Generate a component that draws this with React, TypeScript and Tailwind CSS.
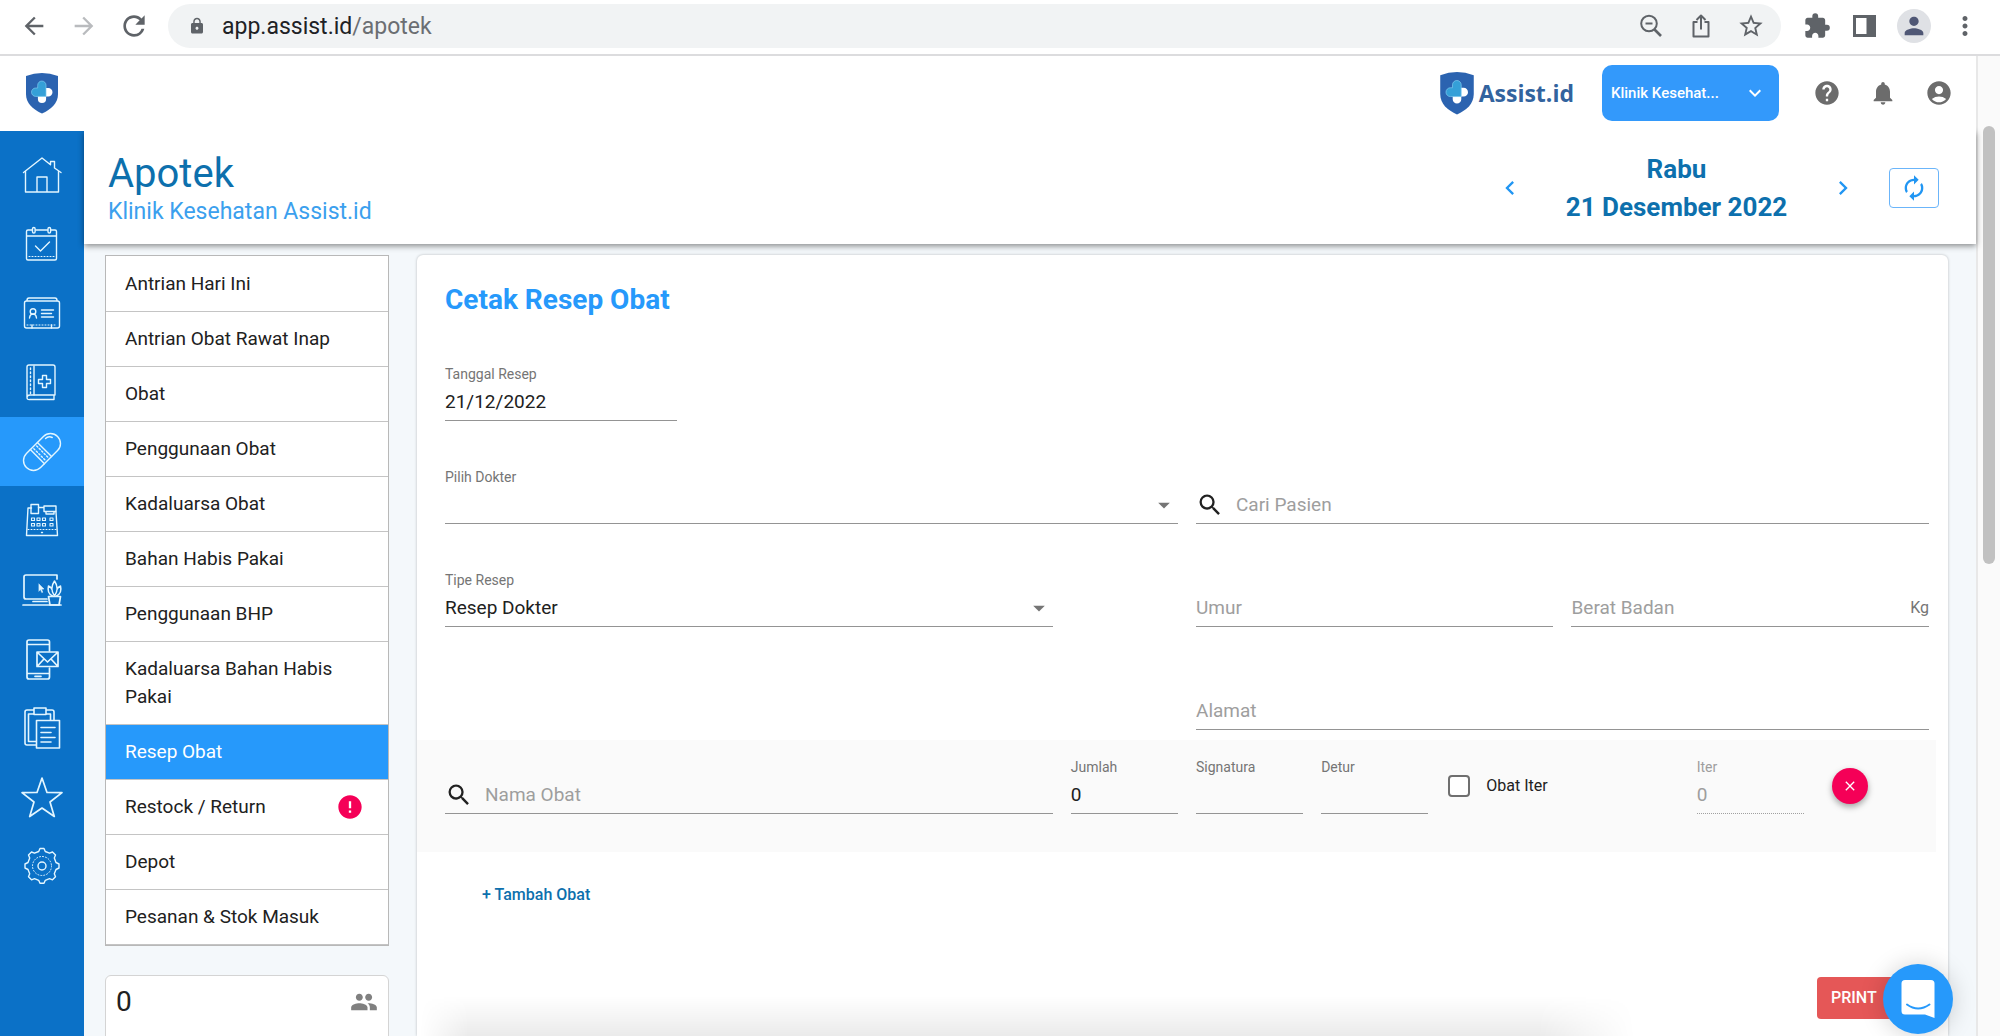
import React, { useId } from "react";
import {
  MdArrowBack,
  MdArrowForward,
  MdRefresh,
  MdLock,
  MdStarBorder,
  MdExtension,
  MdPerson,
  MdMoreVert,
  MdHelp,
  MdNotifications,
  MdAccountCircle,
  MdKeyboardArrowDown,
  MdChevronLeft,
  MdChevronRight,
  MdAutorenew,
  MdSearch,
  MdArrowDropDown,
  MdGroup,
  MdClose,
  MdError,
} from "react-icons/md";

const iconButton = "flex shrink-0 items-center justify-center";

function Shield({ className }: { className: string }) {
  return (
    <svg viewBox="0 0 34 42" className={className} aria-hidden="true">
      <path d="M1 4Q9 1 17 1t16 3V22c0 9.500-7 15.500-16 19.500C8 37.500 1 31.500 1 22Z" fill="#2b63b0" />
      <path d="M20.500 16h2.800a4.200 4.200 0 0 1 0 8.400h-2.800ZM12.900 24h8.200v3a4.100 4.100 0 0 1-8.200 0Z" fill="#fff" />
      <path
        d="M21 24.400H10.700a4.200 4.200 0 0 1 0-8.400h2V13.200a4.150 4.150 0 0 1 8.300 0Z"
        fill="#35a0d8"
        stroke="#7cc8ef"
        strokeWidth="0.700"
      />
    </svg>
  );
}

function Line({ children }: { children: React.ReactNode }) {
  return (
    <svg
      viewBox="0 0 44 44"
      className="size-11"
      fill="none"
      stroke="#e3f6ff"
      strokeWidth="1.400"
      strokeLinejoin="round"
      strokeLinecap="round"
      aria-hidden="true"
    >
      {children}
    </svg>
  );
}

const navItems: { name: string; active?: boolean; art: React.ReactNode }[] = [
  {
    name: "Beranda",
    art: (
      <>
        <path d="M3.500 18.500 22 4l8.500 6.800V7.500h4V14l6.500 4.500" />
        <path d="M5.500 17.500V38h33V17.500M17 38V23h10v15" />
      </>
    ),
  },
  {
    name: "Jadwal",
    art: (
      <>
        <rect x="6.500" y="7" width="30" height="30" rx="1.500" />
        <path d="M7 13h29M15.500 23l5 5 9-9" />
        <rect x="12.500" y="4.500" width="2.600" height="5.500" rx="1.300" fill="#0b71c7" />
        <rect x="28" y="4.500" width="2.600" height="5.500" rx="1.300" fill="#0b71c7" />
        <path d="M9 33.500h26" strokeDasharray="1 2" strokeWidth="1" />
      </>
    ),
  },
  {
    name: "Pasien",
    art: (
      <>
        <rect x="4.500" y="9" width="35" height="27" rx="2" />
        <path d="M7 8.500q0-2.500 2-2.500h26q2 0 2 2.500M21.500 18h12M21.500 21.500h10M21.500 25h12M12 33v3M31.500 33v3" />
        <circle cx="13" cy="19.500" r="2.800" />
        <path d="M9.500 26q.5-4 3.500-4t3.500 4" />
        <path d="M7 33h30" strokeDasharray="1 2" strokeWidth="1" />
      </>
    ),
  },
  {
    name: "Rekam Medis",
    art: (
      <>
        <path d="M7 36V6q0-2 2-2h24q2 0 2 2v28H10q-3 0-3 2.500T10 38.500h24V34" />
        <path d="M14 5v29" />
        <path d="M10.500 7v26" strokeDasharray="1.500 2.500" />
        <path d="M22.500 14.500h4v4h4v4h-4v4h-4v-4h-4v-4h4Z" />
      </>
    ),
  },
  {
    name: "Apotek",
    active: true,
    art: (
      <g transform="rotate(-45 22 22)">
        <rect x="0" y="12" width="44" height="20" rx="10" />
        <path d="M15.500 12v20M25.500 12v20M34 15q4 0 5.500 4" />
        <path d="M18.500 14v17M22.500 14v17" strokeDasharray="1.500 2" />
      </g>
    ),
  },
  {
    name: "Kasir",
    art: (
      <>
        <path d="M11.500 9H8L6.500 36.500h31L36 13" />
        <rect x="11" y="5.500" width="7.500" height="9" />
        <path d="M18.500 8.500h5.500M24 7h12v5.500H24ZM26 12.500V15h8v-2.500" />
        <path
          d="M11.500 19h3v2.500h-3ZM17 19h3v2.500h-3ZM22.500 19h3v2.500h-3ZM30 19h3v2.500h-3ZM11.500 24.500h3V27h-3ZM17 24.500h3V27h-3ZM22.500 24.500h3V27h-3ZM30 24.500h3V27h-3Z"
          strokeWidth="1.100"
        />
        <path d="M8 30.500h28" strokeDasharray="1 2" strokeWidth="1" />
        <path d="M21.500 33.500h1" />
      </>
    ),
  },
  {
    name: "Kantor",
    art: (
      <g strokeWidth="1.700">
        <path d="M27 31H6q-2 0-2-2V9q0-2 2-2h31v4M3 37h38M13 33.500h14" />
        <path d="M28.500 28.500h12L39 37h-9Z" />
        <path
          d="M34.500 28c-3.500-5-3.500-10 0-15 3.500 5 3.500 10 0 15ZM32.500 28c-4-2-5-6-4-10 1.500.5 3 2 3.500 3.500M36.500 28c4-2 5-6 4-10-1.500.5-3 2-3.500 3.500"
          strokeWidth="1.500"
        />
        <path d="m19 16 5 5-2.500.2 1.300 3-1 .4-1.300-3-1.500 1.500Z" fill="#e3f6ff" strokeWidth="0.500" />
      </g>
    ),
  },
  {
    name: "Pesan",
    art: (
      <g strokeWidth="1.700">
        <path d="M29.500 14V5q0-2-2-2H9Q7 3 7 5v35q0 2 2 2h18.500q2 0 2-2v-9M7 7.500h22.500M7 36.500h22.500M15 39.300h6" />
        <path d="M17 15h21v14.500H17ZM17.500 15.500 27.500 25l10-9.500M17.500 29l6.500-7M37.500 29 31 22" />
      </g>
    ),
  },
  {
    name: "Laporan",
    art: (
      <g strokeWidth="1.600">
        <path d="M14 2h12v6.500H14ZM14 4H7Q5 4 5 6v31q0 2 2 2h9M26 4h6q2 0 2 2v8M14 8H8.500v27.500H16M26 8h4.500v6" />
        <path d="M16.500 14.500h23V42h-23ZM21 21.500h14M21 26.500h10M21 31.500h14M21 36h10" />
      </g>
    ),
  },
  {
    name: "Favorit",
    art: (
      <path d="m22 3 5 14.500 15 .2-12 9.300 4.300 14.500L22 33 9.700 41.500 14 27 2 17.700l15-.2Z" strokeWidth="1.700" />
    ),
  },
  {
    name: "Pengaturan",
    art: (
      <>
        <path d="M18.700 7.500 20 4.500h4l1.300 3 4.200 1.700 3-1.200 3 3-1.200 3L36 18.500l3 1.500v4l-3 1.500-1.700 4.300 1.200 3-3 3-3-1.200-4.200 1.700-1.300 3h-4l-1.300-3-4.200-1.700-3 1.200-3-3 1.200-3L8 25.500 5 24v-4l3-1.500 1.700-4.500-1.200-3 3-3 3 1.200Z" />
        <circle cx="22" cy="22" r="4" />
        <circle cx="22" cy="22" r="9.500" strokeDasharray="1 2" strokeWidth="1" />
      </>
    ),
  },
];

const menu: { label: string; active?: boolean; alert?: boolean }[] = [
  { label: "Antrian Hari Ini" },
  { label: "Antrian Obat Rawat Inap" },
  { label: "Obat" },
  { label: "Penggunaan Obat" },
  { label: "Kadaluarsa Obat" },
  { label: "Bahan Habis Pakai" },
  { label: "Penggunaan BHP" },
  { label: "Kadaluarsa Bahan Habis Pakai" },
  { label: "Resep Obat", active: true },
  { label: "Restock / Return", alert: true },
  { label: "Depot" },
  { label: "Pesanan & Stok Masuk" },
];

type FieldProps = {
  span: string;
  label?: string;
  placeholder?: string;
  value?: string;
  search?: boolean;
  suffix?: string;
  disabled?: boolean;
};

function Field({ span, label, placeholder, value, search, suffix, disabled }: FieldProps) {
  const id = useId();
  return (
    <div className={`${span} flex min-w-0 flex-col justify-end`}>
      {label && (
        <label
          htmlFor={id}
          className={`block h-5 text-sm leading-5 ${disabled ? "text-[#9e9e9e]" : "text-[#757575]"}`}
        >
          {label}
        </label>
      )}
      <div
        className={`flex h-[37px] items-center border-b ${
          disabled ? "border-dotted border-[#a0a0a0]" : "border-[#949494]"
        }`}
      >
        {search && <MdSearch className="mr-3 size-7 shrink-0 text-[#212121]" />}
        <input
          id={id}
          type="text"
          aria-label={label ? undefined : placeholder}
          defaultValue={value}
          placeholder={placeholder}
          disabled={disabled}
          className="w-full min-w-0 bg-transparent text-[19px] leading-7 text-[#212121] outline-none placeholder:text-[#9e9e9e] disabled:text-[#9e9e9e]"
        />
        {suffix && <span className="text-base text-[#757575]">{suffix}</span>}
      </div>
    </div>
  );
}

function SelectField({ span, label, options }: { span: string; label: string; options: string[] }) {
  const id = useId();
  return (
    <div className={`${span} min-w-0`}>
      <label htmlFor={id} className="block h-5 text-sm leading-5 text-[#757575]">
        {label}
      </label>
      <div className="grid h-[37px] items-center border-b border-[#949494]">
        <select
          id={id}
          className="col-start-1 row-start-1 w-full appearance-none bg-transparent text-[19px] leading-7 text-[#212121] outline-none"
        >
          {options.map((o) => (
            <option key={o}>{o}</option>
          ))}
        </select>
        <MdArrowDropDown className="pointer-events-none col-start-1 row-start-1 size-7 justify-self-end text-[#757575]" />
      </div>
    </div>
  );
}

function BrowserBar() {
  return (
    <div className="flex h-14 shrink-0 items-center border-b-2 border-[#dcdcde] bg-white px-5 pb-0.5 text-[#5f6368]">
      <button aria-label="Back" className={iconButton}>
        <MdArrowBack className="size-7" />
      </button>
      <button aria-label="Forward" className={`${iconButton} ml-[22px] text-[#b9bbbe]`}>
        <MdArrowForward className="size-7" />
      </button>
      <button aria-label="Reload" className={`${iconButton} ml-5`}>
        <MdRefresh className="size-8" />
      </button>
      <div className="ml-[18px] mr-[22px] flex h-11 min-w-0 flex-1 items-center rounded-full bg-[#f1f3f4] px-4">
        <MdLock className="ml-1 mr-4 size-[18px] shrink-0" />
        <span
          role="textbox"
          aria-label="Address"
          contentEditable
          suppressContentEditableWarning
          className="flex-1 pt-0.5 text-[23px] leading-8 text-[#202124] outline-none"
        >
          app.assist.id<span className="text-[#6b6e72]">/apotek</span>
        </span>
        <div className="flex items-center gap-[22px]">
          <button aria-label="Zoom" className={iconButton}>
            <svg viewBox="0 0 28 28" className="size-7" fill="none" stroke="currentColor" strokeWidth="2" aria-hidden="true">
              <circle cx="12" cy="11.500" r="7.800" />
              <path d="M8.500 11.500h7" />
              <path d="m17.500 17.500 6.500 6.500" strokeWidth="2.600" />
            </svg>
          </button>
          <button aria-label="Share" className={iconButton}>
            <svg viewBox="0 0 28 28" className="size-7" fill="none" stroke="currentColor" strokeWidth="2" aria-hidden="true">
              <path d="M10.500 10H6.500v14.500h15V10h-4M14 17.500V4M9.500 8 14 3.500 18.500 8" strokeLinejoin="round" />
            </svg>
          </button>
          <button aria-label="Bookmark" className={iconButton}>
            <MdStarBorder className="size-7" />
          </button>
        </div>
      </div>
      <div className="flex items-center gap-[19px]">
        <button aria-label="Extensions" className={iconButton}>
          <MdExtension className="size-7" />
        </button>
        <button aria-label="Side panel" className={iconButton}>
          <svg viewBox="0 0 28 28" className="size-7" aria-hidden="true">
            <path fillRule="evenodd" fill="currentColor" d="M3 3h23v22H3Zm3 3v16h10.500V6Z" />
          </svg>
        </button>
        <button aria-label="Profile" className={`${iconButton} size-[34px] rounded-full bg-[#dfe1e5] text-[#4f5775]`}>
          <MdPerson className="size-7" />
        </button>
        <button aria-label="Menu" className={iconButton}>
          <MdMoreVert className="size-[30px]" />
        </button>
      </div>
    </div>
  );
}

function TopBar() {
  return (
    <header className="relative z-20 flex h-[75px] shrink-0 items-center bg-white pb-px pl-[25px] pr-[23px]">
      <Shield className="h-[42px] w-[34px]" />
      <div className="ml-auto flex items-center">
        <Shield className="h-[44px] w-9" />
        <span className="ml-1 font-['Open_Sans','Noto_Sans',sans-serif] text-[23px] font-bold text-[#32639e]">
          Assist.id
        </span>
        <button className="ml-7 flex h-14 w-[177px] items-center justify-between rounded-[10px] bg-[#3399fb] pl-[9px] pr-3 text-[15px] font-medium text-white">
          <span>Klinik Kesehat...</span>
          <MdKeyboardArrowDown className="size-6" />
        </button>
        <div className="ml-[34px] flex items-center gap-7 text-[#6c6c6c]">
          <button aria-label="Bantuan" className={iconButton}>
            <MdHelp className="size-7" />
          </button>
          <button aria-label="Notifikasi" className={iconButton}>
            <MdNotifications className="size-7" />
          </button>
          <button aria-label="Akun" className={iconButton}>
            <MdAccountCircle className="size-7" />
          </button>
        </div>
      </div>
    </header>
  );
}

function PageHeader() {
  return (
    <div className="z-10 flex h-[113px] shrink-0 items-center justify-between bg-white pl-6 pr-[37px] shadow-[0_2px_6px_rgba(0,0,0,0.45)]">
      <div className="pt-1">
        <h1 className="text-[40px] leading-[44px] text-[#0d70ad]">Apotek</h1>
        <p className="text-[23px] leading-8 text-[#3ba0ee]">Klinik Kesehatan Assist.id</p>
      </div>
      <div className="flex items-center">
        <button aria-label="Sebelumnya" className={`${iconButton} text-[#2196f3]`}>
          <MdChevronLeft className="size-7" />
        </button>
        <div className="w-[305px] text-center text-[26px] font-bold leading-[38px] text-[#0d70ad]">
          <div>Rabu</div>
          <div>21 Desember 2022</div>
        </div>
        <button aria-label="Berikutnya" className={`${iconButton} text-[#2196f3]`}>
          <MdChevronRight className="size-7" />
        </button>
        <button
          aria-label="Muat ulang"
          className={`${iconButton} ml-8 h-10 w-[50px] rounded border border-[#6bb5fa] text-[#2196f3]`}
        >
          <MdAutorenew className="size-7" />
        </button>
      </div>
    </div>
  );
}

function SideMenu() {
  return (
    <aside className="flex w-[284px] shrink-0 flex-col gap-[29px]">
      <nav className="border border-[#b8b8b8] bg-white pt-px">
        {menu.map((m) => (
          <a
            key={m.label}
            href="#"
            className={`flex items-center justify-between border-b border-[#c4c4c4] py-[13px] pl-[19px] pr-6 text-[19px] leading-7 ${
              m.active ? "bg-[#2699fb] text-white" : "text-[#212121]"
            }`}
          >
            {m.label}
            {m.alert && <MdError className="size-7 text-[#f50057]" />}
          </a>
        ))}
      </nav>
      <div className="flex h-48 shrink-0 items-start justify-between rounded-md border border-[#d4d4d4] bg-white px-[10px] pt-2">
        <span className="text-[28px] leading-9 text-[#212121]">0</span>
        <MdGroup className="mt-1 size-7 text-[#808080]" />
      </div>
    </aside>
  );
}

function PrescriptionForm() {
  return (
    <main className="min-w-0 flex-1 rounded-t-md bg-white shadow-[0_0_3px_rgba(0,0,0,0.25)]">
      <div className="pl-7 pr-[19px] pt-[25px]">
        <h2 className="text-[28px] font-bold leading-10 text-[#2699fb]">Cetak Resep Obat</h2>
        <div className="mt-11 grid grid-cols-12 gap-x-[18px] gap-y-[46px]">
          <Field span="col-span-2" label="Tanggal Resep" value="21/12/2022" />
          <div className="col-span-10" />
          <SelectField span="col-span-6" label="Pilih Dokter" options={[""]} />
          <Field span="col-span-6" placeholder="Cari Pasien" search />
          <SelectField span="col-span-5" label="Tipe Resep" options={["Resep Dokter"]} />
          <div />
          <Field span="col-span-3" placeholder="Umur" />
          <Field span="col-span-3" placeholder="Berat Badan" suffix="Kg" />
          <div className="col-span-6 h-[57px]" />
          <Field span="col-span-6" placeholder="Alamat" />
        </div>
      </div>
      <div className="mr-3 mt-[10px] grid grid-cols-12 gap-x-[18px] bg-[#fafafa] pb-[38px] pl-7 pr-[7px] pt-[17px]">
        <Field span="col-span-5" placeholder="Nama Obat" search />
        <Field span="col-span-1" label="Jumlah" value="0" />
        <Field span="col-span-1" label="Signatura" />
        <Field span="col-span-1" label="Detur" />
        <label className="col-span-2 flex items-center gap-4 text-base text-[#212121]">
          <input
            type="checkbox"
            className="ml-0.5 size-[22px] appearance-none rounded-sm border-2 border-[#6f6f6f] bg-white"
          />
          Obat Iter
        </label>
        <Field span="col-span-1" label="Iter" value="0" disabled />
        <button
          aria-label="Hapus obat"
          className="ml-[10px] flex size-9 items-center justify-center self-center rounded-full bg-[#f50057] text-white shadow-[0_3px_6px_rgba(0,0,0,0.35)]"
        >
          <MdClose className="size-4" />
        </button>
      </div>
      <div className="pl-7 pr-10">
        <button className="ml-[37px] mt-[29px] block text-base font-medium leading-7 text-[#0d70ad]">
          + Tambah Obat
        </button>
        <div className="mt-[68px] flex justify-end">
          <button className="h-[42px] w-[91px] rounded bg-[#e55757] pl-[14px] text-left text-base font-medium text-white">
            PRINT
          </button>
        </div>
      </div>
    </main>
  );
}

export default function App() {
  return (
    <div className="flex h-screen flex-col overflow-hidden bg-white font-[Roboto,sans-serif]">
      <BrowserBar />
      <div className="relative flex min-h-0 flex-1">
        <div className="flex min-w-0 flex-1 flex-col">
          <TopBar />
          <div className="flex min-h-0 flex-1">
            <nav className="w-[84px] shrink-0 overflow-hidden bg-[#0b71c7] pt-[10px]">
              {navItems.map((n) => (
                <a
                  key={n.name}
                  href="#"
                  aria-label={n.name}
                  className={`flex h-[69px] items-center justify-center ${n.active ? "bg-[#2699fb]" : ""}`}
                >
                  <Line>{n.art}</Line>
                </a>
              ))}
            </nav>
            <div className="flex min-w-0 flex-1 flex-col">
              <PageHeader />
              <div className="flex min-h-0 flex-1 gap-7 overflow-hidden bg-[#f4f8fb] pl-[21px] pr-7 pt-[11px]">
                <SideMenu />
                <PrescriptionForm />
              </div>
            </div>
          </div>
        </div>
        <div className="w-6 shrink-0 border-l-2 border-[#e8e8e8] bg-[#fafafa] pl-[5px] pt-[70px]">
          <div className="h-[438px] w-3 rounded-full bg-[#c1c1c1]" />
        </div>
        <div className="pointer-events-none absolute bottom-0 left-[420px] right-[365px] h-10 bg-linear-to-t from-black/8 to-transparent [mask-image:linear-gradient(to_right,transparent,black_4%,black_92%,transparent)]" />
        <button
          aria-label="Chat"
          className="absolute bottom-[2px] right-[47px] z-20 flex size-[70px] items-center justify-center rounded-full bg-[#2699fb] shadow-[0_1px_24px_rgba(0,0,0,0.18)]"
        >
          <svg viewBox="0 0 34 38" className="h-[38px] w-[34px]" aria-hidden="true">
            <path d="M4 0h26q3.500 0 3.500 3.500V38L24 34.500H4Q.5 34.500.5 31V3.500Q.5 0 4 0Z" fill="#fff" />
            <path d="M6 24.500q11 8 22.500 0" fill="none" stroke="#2699fb" strokeWidth="2" strokeLinecap="round" />
          </svg>
        </button>
      </div>
    </div>
  );
}
